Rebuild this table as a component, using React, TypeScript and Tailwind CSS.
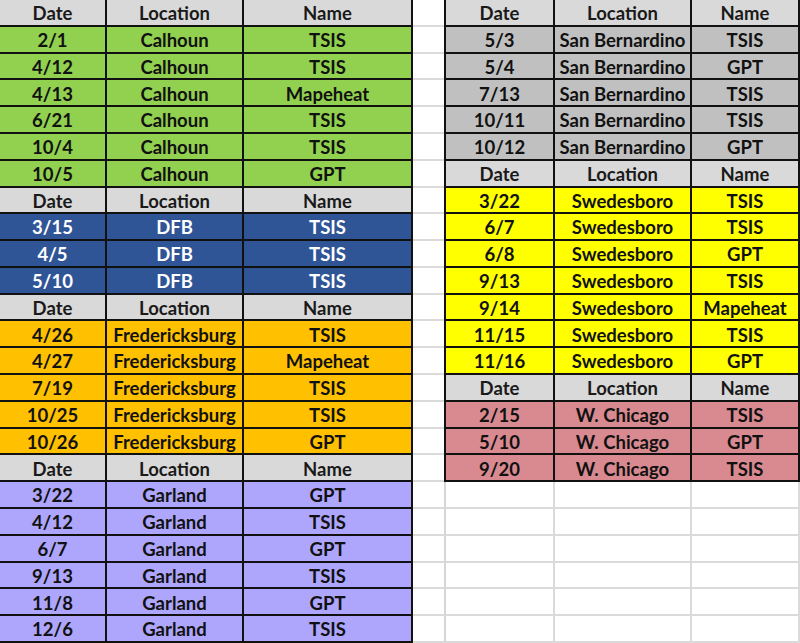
import React from "react";

type Row = { kind: "header" } | { kind: "data"; d: string; l: string; n: string; color: string; text: string } | { kind: "empty" };

const H: Row = { kind: "header" };
const mk = (color: string, text: string, l: string) => (d: string, n: string): Row => ({ kind: "data", d, l, n, color, text });

const green = mk("bg-[#92d050]", "text-[#111]", "Calhoun");
const blue = mk("bg-[#2f5597]", "text-white", "DFB");
const orange = mk("bg-[#ffc000]", "text-[#111]", "Fredericksburg");
const purple = mk("bg-[#aea6fc]", "text-[#111]", "Garland");
const gray = mk("bg-[#c0c0c0]", "text-[#111]", "San Bernardino");
const yellow = mk("bg-[#ffff00]", "text-[#111]", "Swedesboro");
const pink = mk("bg-[#d98a90]", "text-[#111]", "W. Chicago");
const E: Row = { kind: "empty" };

const left: Row[] = [
  H,
  green("2/1", "TSIS"),
  green("4/12", "TSIS"),
  green("4/13", "Mapeheat"),
  green("6/21", "TSIS"),
  green("10/4", "TSIS"),
  green("10/5", "GPT"),
  H,
  blue("3/15", "TSIS"),
  blue("4/5", "TSIS"),
  blue("5/10", "TSIS"),
  H,
  orange("4/26", "TSIS"),
  orange("4/27", "Mapeheat"),
  orange("7/19", "TSIS"),
  orange("10/25", "TSIS"),
  orange("10/26", "GPT"),
  H,
  purple("3/22", "GPT"),
  purple("4/12", "TSIS"),
  purple("6/7", "GPT"),
  purple("9/13", "TSIS"),
  purple("11/8", "GPT"),
  purple("12/6", "TSIS"),
];

const right: Row[] = [
  H,
  gray("5/3", "TSIS"),
  gray("5/4", "GPT"),
  gray("7/13", "TSIS"),
  gray("10/11", "TSIS"),
  gray("10/12", "GPT"),
  H,
  yellow("3/22", "TSIS"),
  yellow("6/7", "TSIS"),
  yellow("6/8", "GPT"),
  yellow("9/13", "TSIS"),
  yellow("9/14", "Mapeheat"),
  yellow("11/15", "TSIS"),
  yellow("11/16", "GPT"),
  H,
  pink("2/15", "TSIS"),
  pink("5/10", "GPT"),
  pink("9/20", "TSIS"),
  E, E, E, E, E, E,
];

function cells(row: Row, side: "l" | "r", i: number) {
  const out: React.ReactNode[] = [];
  const vals =
    row.kind === "header" ? ["Date", "Location", "Name"] : row.kind === "data" ? [row.d, row.l, row.n] : ["", "", ""];
  vals.forEach((v, c) => {
    let cls = "flex items-center justify-center overflow-hidden whitespace-nowrap leading-none pt-[2px] ";
    if (row.kind === "empty") {
      cls += "bg-white border-r-2 border-b-2 border-[#dadada] ";
      if (c === 0 && side === "r") cls += "border-l-2 border-l-[#d6d6d6] ";
    } else {
      cls += "border-r-2 border-b-2 border-[#111] ";
      if (c === 0 && side === "r") cls += "border-l-2 ";
      if (row.kind === "header") cls += "bg-[#d9d9d9] text-[#1a1a1a] ";
      else cls += row.color + " " + row.text + " ";
    }
    out.push(
      <div key={side + i + "-" + c} className={cls}>
        {v}
      </div>
    );
  });
  return out;
}

export default function App() {
  return (
    <div
      className="grid h-[643px] w-[800px] overflow-hidden bg-white text-[18.5px] font-bold grid-cols-[107px_137px_169px_31px_111px_137px_108px] grid-rows-[repeat(24,minmax(0,1fr))]"
      style={{ fontFamily: "Lato, 'Open Sans', sans-serif" }}
    >
      {left.map((row, i) => (
        <React.Fragment key={i}>
          {cells(row, "l", i)}
          <div className="border-b-2 border-[#dadada] bg-white" />
          {cells(right[i], "r", i)}
        </React.Fragment>
      ))}
    </div>
  );
}
